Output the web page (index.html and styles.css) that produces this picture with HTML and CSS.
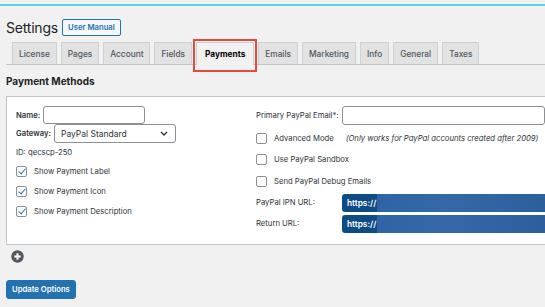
FILE: index.html
```html
<!DOCTYPE html>
<html lang="en">
<head>
  <meta charset="UTF-8" />
  <title>Settings - Payments</title>
  <link rel="stylesheet" href="styles.css">
</head>
<body>
  <div class="topline"></div>
  <div class="wrap">
    <h1 class="title">Settings<a class="manual-btn" href="#">User Manual</a></h1>

    <nav class="tabs">
      <a class="tab" href="#">License</a>
      <a class="tab" href="#">Pages</a>
      <a class="tab" href="#">Account</a>
      <a class="tab" href="#">Fields</a>
      <a class="tab active" href="#">Payments</a>
      <a class="tab" href="#">Emails</a>
      <a class="tab" href="#">Marketing</a>
      <a class="tab" href="#">Info</a>
      <a class="tab" href="#">General</a>
      <a class="tab" href="#">Taxes</a>
    </nav>

    <h2 class="section-title">Payment Methods</h2>

    <div class="box">
      <div class="col-left">
        <div class="row">
          <label class="lbl">Name:</label>
          <input class="txt name-input" type="text">
        </div>
        <div class="row">
          <label class="lbl">Gateway:</label>
          <div class="select">PayPal Standard
            <svg class="chev" width="8" height="5" viewBox="0 0 8 5"><path d="M1 1l3 3 3-3" fill="none" stroke="#2c3338" stroke-width="1.3"/></svg>
          </div>
        </div>
        <div class="id-line">ID: qecscp-250</div>
        <div class="check-row"><span class="cb checked"></span>Show Payment Label</div>
        <div class="check-row"><span class="cb checked"></span>Show Payment Icon</div>
        <div class="check-row"><span class="cb checked"></span>Show Payment Description</div>
      </div>

      <div class="col-right">
        <div class="row">
          <label class="rlbl">Primary PayPal Email*:</label>
          <input class="txt wide" type="text">
        </div>
        <div class="check-row r"><span class="cb"></span>Advanced Mode <em class="note">(Only works for PayPal accounts created after 2009)</em></div>
        <div class="check-row r"><span class="cb"></span>Use PayPal Sandbox</div>
        <div class="check-row r"><span class="cb"></span>Send PayPal Debug Emails</div>
        <div class="row url-row">
          <label class="rlbl">PayPal IPN URL:</label>
          <div class="url">https://<span class="blur"></span></div>
        </div>
        <div class="row url-row">
          <label class="rlbl">Return URL:</label>
          <div class="url">https://<span class="blur"></span></div>
        </div>
      </div>
    </div>

    <div class="add">
      <svg width="13" height="13" viewBox="0 0 13 13"><circle cx="6.5" cy="6.5" r="6.2" fill="#50575e"/><path d="M6.5 3.3v6.4M3.3 6.5h6.4" stroke="#fff" stroke-width="2"/></svg>
    </div>

    <button class="btn-primary">Update Options</button>
  </div>
</body>
</html>
```

FILE: styles.css
```css
body {
  margin: 0;
  background: #f1f1f1;
  color: #2c3338;
  font-family: Inter, 'Noto Sans', sans-serif;
  font-size: 7.7px;
  overflow: hidden;
  white-space: nowrap;
}
.topline {
  margin-top: 4px;
  height: 2px;
  background: #5fd3e3;
}
.wrap {
  padding: 0 0 0 6px;
}
.title {
  display: flex;
  align-items: center;
  height: 20px;
  margin: 11px 0 0;
  font-size: 14px;
  font-weight: 400;
  color: #1d2327;
  letter-spacing: -0.2px;
}
.manual-btn {
  margin-left: 4px;
  padding: 3px 5px;
  border: 1px solid #2271b1;
  border-radius: 2px;
  background: #f6f7f7;
  color: #2271b1;
  font-size: 7.7px;
  font-weight: 600;
  letter-spacing: 0;
  text-decoration: none;
}
.tabs {
  display: flex;
  gap: 4px;
  margin-top: 5px;
  padding-left: 6px;
  border-bottom: 1px solid #c3c4c7;
  height: 22px;
}
.tab {
  display: flex;
  align-items: center;
  height: 21px;
  padding: 0 6px;
  border: 1px solid #cfd0d2;
  border-bottom: none;
  background: #e2e2e3;
  color: #50575e;
  font-size: 8.3px;
  font-weight: 500;
  text-decoration: none;
}
.tab.active {
  position: relative;
  height: 22px;
  margin-bottom: -1px;
  padding: 0 8px;
  background: #f1f1f1;
  color: #000;
  font-weight: 700;
}
.tab.active::after {
  content: "";
  position: absolute;
  left: -4px;
  right: -4px;
  top: -4px;
  bottom: -7px;
  border: 2px solid #e8473b;
}
.section-title {
  margin: 10px 0 0;
  font-size: 10px;
  font-weight: 700;
  color: #1d2327;
}
.box {
  display: flex;
  margin-top: 9px;
  margin-right: -10px;
  padding: 9px 9px 10px;
  background: #fff;
  border: 1px solid #c3c4c7;
}
.col-left {
  width: 240px;
}
.col-right {
  flex: 1;
}
.row {
  display: flex;
  align-items: center;
}
.lbl {
  font-weight: 600;
  margin-right: 3px;
}
.txt {
  height: 18px;
  box-sizing: border-box;
  border: 1px solid #8c8f94;
  border-radius: 3px;
  background: #fff;
  padding: 0 4px;
  font: inherit;
}
.name-input {
  width: 102px;
}
.select {
  display: flex;
  align-items: center;
  justify-content: space-between;
  width: 122px;
  height: 19px;
  box-sizing: border-box;
  padding: 0 7px 0 6px;
  border: 1px solid #8c8f94;
  border-radius: 3px;
  font-size: 8.5px;
}
.id-line {
  margin-top: 3px;
  height: 14px;
  line-height: 14px;
}
.check-row {
  display: flex;
  align-items: center;
  height: 20px;
}
.check-row:nth-child(4) {
  margin-top: 1px;
}
.cb {
  width: 9px;
  height: 9px;
  border: 1px solid #8c8f94;
  border-radius: 2px;
  margin-right: 7px;
  position: relative;
  flex-shrink: 0;
}
.cb.checked::after {
  content: "";
  position: absolute;
  left: 3px;
  top: 0;
  width: 3px;
  height: 6px;
  border: solid #2271b1;
  border-width: 0 1.5px 1.5px 0;
  transform: rotate(40deg);
}
.check-row.r {
  height: 21px;
}
.check-row.r:nth-child(2) {
  margin-top: 3px;
}
.note {
  margin-left: 12px;
  color: #2c3338;
}
.rlbl {
  width: 86px;
  flex-shrink: 0;
}
.wide {
  flex: 1;
  height: 19px;
}
.url-row {
  height: 21px;
}
.url {
  flex: 1;
  display: flex;
  align-items: center;
  height: 18px;
  padding-left: 5px;
  border-radius: 3px 0 0 3px;
  background: #0f4c86;
  color: #fff;
  font-weight: 600;
  font-size: 8.3px;
}
.blur {
  flex: 1;
  height: 100%;
  margin-left: 1px;
  background: linear-gradient(90deg, #2e64a6, #3468a8 40%, #2c5f9c);
}
.add {
  display: flex;
  margin-top: 5px;
  padding-left: 5px;
}
.btn-primary {
  margin-top: 17px;
  height: 19px;
  padding: 0 5px;
  border: 1px solid #2271b1;
  border-radius: 3px;
  background: #2271b1;
  color: #fff;
  font-family: inherit;
  font-size: 7.7px;
  font-weight: 600;
}
```
